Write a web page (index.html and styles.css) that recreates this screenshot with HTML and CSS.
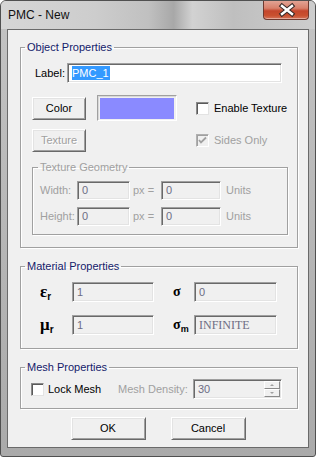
FILE: index.html
```html
<!DOCTYPE html>
<html lang="en">
<head>
    <meta charset="UTF-8">
    <title>PMC - New</title>
    <link rel="stylesheet" href="styles.css">
</head>
<body>
    <div class="window">
        <div class="titlebar">
            <span class="title">PMC - New</span>
            <div class="close-btn">
                <svg width="46" height="19" viewBox="0 0 46 19">
                    <path d="M19 6 L29 14 M29 6 L19 14" stroke="#3a2a28" stroke-width="4.6" stroke-linecap="square" fill="none"/>
                    <path d="M19 6 L29 14 M29 6 L19 14" stroke="#ffffff" stroke-width="2.4" stroke-linecap="square" fill="none"/>
                </svg>
            </div>
        </div>

        <div class="client">
            <!-- Object properties -->
            <fieldset class="group group-object">
                <legend>Object Properties</legend>
                <div class="row row-label">
                    <label class="lbl-label">Label:</label>
                    <div class="edit edit-label"><span class="sel">PMC_1</span></div>
                </div>

                <div class="obj-grid">
                    <div class="btn btn-small">Color</div>
                    <div class="swatch"><div class="swatch-fill"></div></div>
                    <div class="check">
                        <span class="box"></span>
                        <span class="check-text">Enable Texture</span>
                    </div>

                    <div class="btn btn-small disabled">Texture</div>
                    <div></div>
                    <div class="check disabled">
                        <span class="box">
                            <svg width="11" height="11" viewBox="0 0 11 11">
                                <path d="M2 5 L4 7.5 L9 2.5" stroke="#a0a0a0" stroke-width="1.8" fill="none"/>
                            </svg>
                        </span>
                        <span class="check-text">Sides Only</span>
                    </div>
                </div>

                <fieldset class="group group-geom disabled">
                    <legend>Texture Geometry</legend>
                    <div class="row geom-row">
                        <span class="geom-lbl">Width:</span>
                        <div class="edit edit-geom">0</div>
                        <span class="px">px =</span>
                        <div class="edit edit-units">0</div>
                        <span class="units">Units</span>
                    </div>
                    <div class="row geom-row">
                        <span class="geom-lbl">Height:</span>
                        <div class="edit edit-geom">0</div>
                        <span class="px">px =</span>
                        <div class="edit edit-units">0</div>
                        <span class="units">Units</span>
                    </div>
                </fieldset>
            </fieldset>

            <!-- Material properties -->
            <fieldset class="group group-material">
                <legend>Material Properties</legend>
                <div class="row mat-row">
                    <span class="sym sym-eps">ε<sub>r</sub></span>
                    <div class="edit edit-mat">1</div>
                    <span class="sym sym-sigma">σ</span>
                    <div class="edit edit-mat2">0</div>
                </div>
                <div class="row mat-row">
                    <span class="sym sym-mu">μ<sub>r</sub></span>
                    <div class="edit edit-mat">1</div>
                    <span class="sym sym-sigma">σ<sub>m</sub></span>
                    <div class="edit edit-mat2 serif">INFINITE</div>
                </div>
            </fieldset>

            <!-- Mesh properties -->
            <fieldset class="group group-mesh">
                <legend>Mesh Properties</legend>
                <div class="row mesh-row">
                    <div class="check check-lock">
                        <span class="box"></span>
                        <span class="check-text">Lock Mesh</span>
                    </div>
                    <span class="density-lbl">Mesh Density:</span>
                    <div class="edit edit-density">
                        30
                        <div class="spin">
                            <div class="spin-btn"><span class="arr-up"></span></div>
                            <div class="spin-btn"><span class="arr-down"></span></div>
                        </div>
                    </div>
                </div>
            </fieldset>

            <div class="buttons">
                <div class="btn btn-dlg">OK</div>
                <div class="btn btn-dlg">Cancel</div>
            </div>
        </div>
    </div>
</body>
</html>
```

FILE: styles.css
```css
/* Janela de diálogo estilo Windows 7 básico */
body {
    margin: 0;
    font-family: 'Liberation Sans', Arial, sans-serif;
    font-size: 11px;
    line-height: 13px;
    color: #000;
    background: #fff;
}

.window {
    width: 316px;
    height: 457px;
    box-sizing: border-box;
    border: 1px solid #505050;
    border-radius: 6px 6px 3px 3px;
    background: linear-gradient(180deg, #c4c4c4 0%, #b4b4b4 60%, #aaaaaa 100%);
    display: flex;
    flex-direction: column;
    overflow: hidden;
}

.titlebar {
    height: 28px;
    flex: none;
    display: flex;
    align-items: flex-start;
    background: linear-gradient(90deg, #d6d6d6 0%, #cdcdcd 30%, #c0c0c0 47%, #a8a8a8 55%, #d2d2d2 61%, #bfbfbf 74%, #cdcdcd 100%);
}

.title {
    font-size: 12px;
    line-height: 28px;
    padding-left: 7px;
    color: #111;
}

.close-btn {
    margin-left: auto;
    margin-right: 6px;
    width: 46px;
    height: 19px;
    box-sizing: border-box;
    border: 1px solid #6e3a30;
    border-top: none;
    border-radius: 0 0 4px 4px;
    background: linear-gradient(180deg, #e2a394 0%, #d8806b 40%, #c4462c 55%, #c9502f 80%, #d4735a 100%);
    box-shadow: inset 0 -1px 0 rgba(255, 255, 255, 0.4);
    overflow: hidden;
}

.close-btn svg {
    display: block;
    margin: -1px 0 0 -1px;
}

.client {
    flex: 1;
    margin: 0 6px 8px;
    border: 1px solid #6a6a6a;
    background: #f0f0f0;
    display: flex;
    flex-direction: column;
}

/* Group boxes */
.group {
    margin: 0;
    padding: 0;
    border: 1px solid #a0a0a0;
    box-shadow: 1px 1px 0 #fff, inset 1px 1px 0 #fff;
    min-width: 0;
}

.group legend {
    margin-left: 4px;
    padding: 0 2px;
    line-height: 13px;
    color: #14206a;
}

.group-object {
    margin: 11px 10px 0 12px;
    padding-bottom: 12px;
}

.group-material {
    margin: 12px 10px 0 12px;
    padding-bottom: 13px;
}

.group-mesh {
    margin: 12px 10px 0 12px;
    padding-bottom: 9px;
}

.row {
    display: flex;
    align-items: center;
}

/* Label row */
.row-label {
    margin-top: 9px;
    padding-left: 14px;
}

.lbl-label {
    width: 32px;
}

/* Sunken edit boxes */
.edit {
    box-sizing: border-box;
    height: 20px;
    border: 1px solid;
    border-color: #a0a0a0 #fff #fff #a0a0a0;
    box-shadow: inset 1px 1px 0 #696969, inset -1px -1px 0 #e3e3e3;
    padding: 0 0 0 4px;
    display: flex;
    align-items: center;
    color: #6d6d84;
    background: #f0f0f0;
}

.edit-label {
    width: 215px;
    background: #fff;
    padding-left: 4px;
}

.sel {
    background: #3399ff;
    color: #fff;
    line-height: 14px;
    padding: 0 1px 0 0;
}

/* Object grid: Color / swatch / checks */
.obj-grid {
    display: grid;
    grid-template-columns: 65px 99px 1fr;
    grid-template-rows: 26px 23px;
    row-gap: 8px;
    align-items: center;
    margin-top: 12px;
    padding-left: 11px;
}

.btn {
    box-sizing: border-box;
    height: 23px;
    border: 1px solid;
    border-color: #fff #696969 #696969 #fff;
    box-shadow: inset 1px 1px 0 #e3e3e3, inset -1px -1px 0 #a0a0a0;
    background: #f0f0f0;
    display: flex;
    align-items: center;
    justify-content: center;
}

.btn-small {
    width: 54px;
}

.btn.disabled {
    color: #a0a0a0;
    text-shadow: 1px 1px 0 #fff;
}

.swatch {
    box-sizing: border-box;
    width: 80px;
    height: 26px;
    border: 1px solid;
    border-color: #a0a0a0 #fff #fff #a0a0a0;
    box-shadow: inset 1px 1px 0 #d8d8d8;
    padding: 2px 2px 1px 2px;
}

.swatch-fill {
    width: 100%;
    height: 100%;
    background: #8a8aff;
}

/* Checkboxes */
.check {
    display: flex;
    align-items: center;
}

.check .box {
    box-sizing: border-box;
    width: 13px;
    height: 13px;
    border: 1px solid;
    border-color: #8a8a8a #e3e3e3 #e3e3e3 #8a8a8a;
    box-shadow: inset 1px 1px 0 #5a5a5a;
    background: #fff;
    display: flex;
    align-items: center;
    justify-content: center;
}

.check .box svg {
    display: block;
}

.check-text {
    margin-left: 5px;
}

.check.disabled .box {
    background: #f0f0f0;
    border-color: #b0b0b0 #fff #fff #b0b0b0;
    box-shadow: inset 1px 1px 0 #a0a0a0;
}

.check.disabled .check-text {
    color: #a0a0a0;
}

/* Texture geometry */
.group-geom {
    margin: 9px 0 0 11px;
    width: 256px;
    box-sizing: border-box;
    padding-bottom: 8px;
}

.group-geom legend {
    margin-left: 5px;
    color: #a0a0a0;
}

.geom-row {
    margin-top: 7px;
    padding-left: 7px;
    color: #a0a0a0;
}

.geom-lbl {
    width: 37px;
}

.geom-row .edit {
    height: 19px;
}

.edit-geom {
    width: 53px;
}

.px {
    margin-left: 3px;
    width: 28px;
}

.edit-units {
    width: 60px;
}

.units {
    margin-left: 5px;
}

/* Material rows */
.mat-row {
    padding-left: 19px;
    margin-top: 9px;
}

.mat-row + .mat-row {
    margin-top: 13px;
}

.sym {
    font-family: 'Liberation Serif', 'DejaVu Serif', serif;
    font-weight: bold;
    line-height: 16px;
}

.sym sub {
    font-family: 'Liberation Sans', Arial, sans-serif;
    font-size: 10px;
    line-height: 0;
    vertical-align: -3px;
}

.sym-eps,
.sym-mu {
    width: 32px;
    font-size: 17px;
}

.sym-sigma {
    margin-left: 19px;
    width: 21px;
    font-size: 14px;
}

.sym-sigma sub {
    font-size: 9px;
}

.edit-mat {
    width: 82px;
}

.edit-mat2 {
    width: 83px;
}

.serif {
    font-family: 'Liberation Serif', serif;
    font-size: 12px;
}

/* Mesh row */
.mesh-row {
    margin-top: 5px;
    padding-left: 10px;
}

.check-lock {
    width: 87px;
}

.check-lock .check-text {
    margin-left: 4px;
}

.density-lbl {
    width: 75px;
    color: #a0a0a0;
}

.edit-density {
    width: 89px;
    position: relative;
}

.spin {
    margin-left: auto;
    margin-right: 1px;
    display: flex;
    flex-direction: column;
    width: 16px;
}

.spin-btn {
    box-sizing: border-box;
    height: 8px;
    border: 1px solid;
    border-color: #fff #8a8a8a #8a8a8a #fff;
    background: #f0f0f0;
    display: flex;
    align-items: center;
    justify-content: center;
}

.arr-up,
.arr-down {
    width: 0;
    height: 0;
    border-left: 2px solid transparent;
    border-right: 2px solid transparent;
}

.arr-up {
    border-bottom: 2px solid #a0a0a0;
}

.arr-down {
    border-top: 2px solid #a0a0a0;
}

/* Dialog buttons */
.buttons {
    margin-top: 8px;
    display: flex;
    justify-content: center;
    gap: 25px;
}

.btn-dlg {
    width: 75px;
}
```
